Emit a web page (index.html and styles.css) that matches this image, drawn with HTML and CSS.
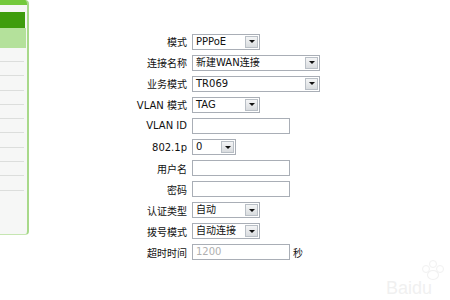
FILE: index.html
```html
<!DOCTYPE html>
<html lang="zh">
<head>
<meta charset="utf-8">
<link rel="stylesheet" href="styles.css">
</head>
<body>
<div class="page">
  <aside class="side">
    <div class="side-top"></div>
    <div class="side-head"></div>
    <div class="side-sub"></div>
    <ul class="side-list">
      <li></li><li></li><li></li><li></li><li></li><li></li><li></li><li></li><li></li><li></li>
    </ul>
  </aside>
  <form class="form">
    <label class="lbl">模式</label>
    <div class="sel w68"><span class="val">PPPoE</span><span class="arr"></span></div>
    <label class="lbl">连接名称</label>
    <div class="sel w128"><span class="val">新建WAN连接</span><span class="arr"></span></div>
    <label class="lbl">业务模式</label>
    <div class="sel w128"><span class="val">TR069</span><span class="arr"></span></div>
    <label class="lbl">VLAN 模式</label>
    <div class="sel w68"><span class="val">TAG</span><span class="arr"></span></div>
    <label class="lbl">VLAN ID</label>
    <div class="inp"></div>
    <label class="lbl">802.1p</label>
    <div class="sel w44"><span class="val">0</span><span class="arr"></span></div>
    <label class="lbl">用户名</label>
    <div class="inp"></div>
    <label class="lbl">密码</label>
    <div class="inp"></div>
    <label class="lbl">认证类型</label>
    <div class="sel w68"><span class="val">自动</span><span class="arr"></span></div>
    <label class="lbl">拨号模式</label>
    <div class="sel w68"><span class="val">自动连接</span><span class="arr"></span></div>
    <label class="lbl">超时时间</label>
    <div class="field"><div class="inp dis"><span class="val">1200</span></div><span class="unit">秒</span></div>
  </form>
</div>
<div class="wm"><span class="paw"><i></i><i></i><i></i><b></b></span><span class="wm-text">Baidu</span></div>
</body>
</html>
```

FILE: styles.css
```css
html, body {
  margin: 0;
  padding: 0;
  background: #ffffff;
}
body {
  width: 450px;
  height: 300px;
  overflow: hidden;
  position: relative;
  font-family: "DejaVu Sans", "Noto Sans CJK SC", sans-serif;
  font-size: 10px;
  color: #222;
}
.page {
  display: flex;
  align-items: flex-start;
}
.side {
  width: 29px;
  height: 235px;
  box-sizing: border-box;
  border-right: 2px solid #a8d98a;
  border-bottom: 1px solid #c6e6b2;
  border-bottom-right-radius: 4px;
  border-top-right-radius: 4px;
  background: #f6f7f6;
  display: flex;
  flex-direction: column;
  overflow: hidden;
}
.side-top {
  height: 5px;
  background: #74c93c;
  margin-bottom: 7px;
  flex: none;
}
.side-head {
  height: 16px;
  width: 25px;
  background: #3f9d0d;
  flex: none;
}
.side-sub {
  height: 20px;
  width: 26px;
  background: #b4e19b;
  flex: none;
}
.side-list {
  list-style: none;
  margin: 0;
  padding: 0;
  width: 24px;
}
.side-list li {
  height: 14.3px;
  border-bottom: 1px solid #dcdedc;
  box-sizing: border-box;
}
.side-list li:first-child {
  height: 14px;
}
.form {
  margin: 31px 0 0 0;
  display: grid;
  grid-template-columns: 158px auto;
  grid-auto-rows: 21.1px;
  column-gap: 5px;
  align-items: center;
  justify-items: start;
}
.lbl {
  justify-self: end;
  font-family: "DejaVu Sans", "Noto Sans CJK SC", sans-serif;
  font-size: 10px;
  color: #111;
  white-space: nowrap;
}
.sel, .inp {
  height: 16px;
  box-sizing: border-box;
  border: 1px solid #a9aeb6;
  background: #fff;
  display: flex;
  align-items: center;
  position: relative;
}
.val {
  padding-left: 3px;
  font-size: 10px;
  line-height: 14px;
  color: #111;
  white-space: nowrap;
}
.w68 { width: 68px; }
.w128 { width: 128px; }
.w44 { width: 44px; }
.inp { width: 98px; }
.arr {
  margin-left: auto;
  margin-right: 1px;
  width: 13px;
  height: 12px;
  box-sizing: border-box;
  border: 1px solid #b9bfc6;
  background: linear-gradient(#f4f5f6, #d9dcdf);
  display: flex;
  align-items: center;
  justify-content: center;
}
.arr::after {
  content: "";
  border-left: 3px solid transparent;
  border-right: 3px solid transparent;
  border-top: 3px solid #111;
}
.field {
  display: flex;
  align-items: center;
  gap: 3px;
}
.dis .val {
  color: #b0b0b0;
}
.unit {
  font-family: "Noto Sans CJK SC", sans-serif;
  font-size: 10px;
  color: #111;
}
.wm {
  position: absolute;
  left: 384px;
  top: 258px;
  width: 66px;
  height: 42px;
  opacity: 0.22;
}
.wm-text {
  position: absolute;
  left: 2px;
  top: 20px;
  font-family: "Liberation Sans", sans-serif;
  font-size: 18px;
  line-height: 20px;
  color: #bdbdbd;
}
.paw {
  position: absolute;
  left: 38px;
  top: 2px;
  width: 22px;
  height: 20px;
}
.paw i {
  position: absolute;
  width: 6px;
  height: 6px;
  border: 1px solid #c0c0c0;
  border-radius: 50%;
}
.paw i:nth-child(1) { left: 0; top: 5px; }
.paw i:nth-child(2) { left: 7px; top: 0; }
.paw i:nth-child(3) { left: 14px; top: 5px; }
.paw b {
  position: absolute;
  left: 5px;
  top: 10px;
  width: 10px;
  height: 8px;
  border: 1px solid #c0c0c0;
  border-radius: 50%;
}
```
